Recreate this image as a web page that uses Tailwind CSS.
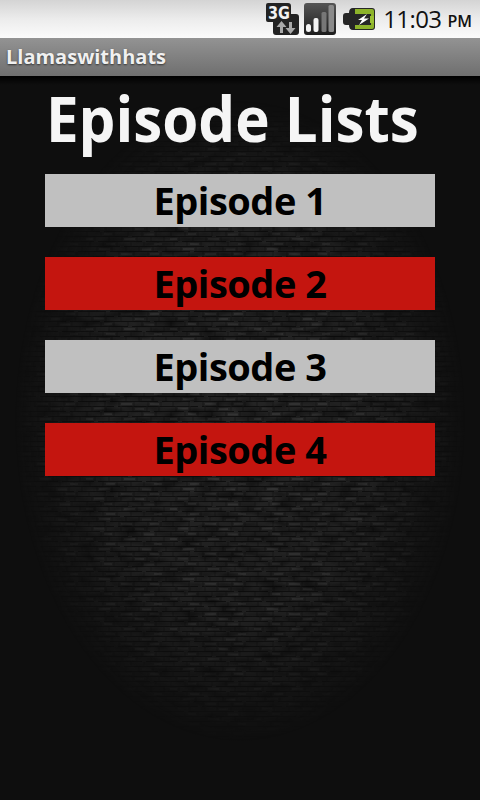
<!DOCTYPE html>
<html>
<head>
<meta charset="utf-8">
<script src="https://cdn.jsdelivr.net/npm/@tailwindcss/browser@4"></script>
</head>
<body class="m-0 bg-[#0e0e0e]">
<div class="relative w-[480px] h-[800px] overflow-hidden flex flex-col font-['Open_Sans','Liberation_Sans',sans-serif] bg-[#0e0e0e]">
  <!-- Status bar -->
  <div class="h-[38px] shrink-0 bg-gradient-to-b from-[#d4d4d4] via-[#ececec] to-[#fbfbfb] flex items-center justify-end pr-[8px]">
    <svg width="33" height="32" viewBox="0 0 33 32" class="mr-[5px]">
      <defs>
        <linearGradient id="dk" x1="0" y1="0" x2="0" y2="1"><stop offset="0" stop-color="#555"/><stop offset="1" stop-color="#1c1c1c"/></linearGradient>
      </defs>
      <path d="M2 0H22Q25 0 25 3V11H30Q33 11 33 14V29Q33 32 30 32H10Q7 32 7 29V19H2Q0 19 0 17V2Q0 0 2 0Z" fill="#222"/>
      <text x="2" y="16" font-family="DejaVu Sans" font-weight="bold" font-size="17" fill="#f2f2f2" textLength="22" lengthAdjust="spacingAndGlyphs">3G</text>
      <path d="M14 30V24H10.500L15.500 18L20.500 24H17V30Z" fill="#a8a8a8"/>
      <path d="M23 19V25H19.500L24.500 31L29.500 25H26V19Z" fill="#a8a8a8"/>
    </svg>
    <svg width="32" height="32" viewBox="0 0 32 32" class="mr-[7px]">
      <rect width="32" height="32" rx="3" fill="url(#dk)"/>
      <rect x="2" y="21" width="5" height="8" rx="2.500" fill="#f4f4f4"/>
      <rect x="9.500" y="15" width="5" height="14" rx="2" fill="#f4f4f4"/>
      <rect x="17.500" y="9" width="5" height="20" rx="1.500" fill="#777"/>
      <rect x="24.500" y="2" width="5.500" height="27" rx="1.500" fill="#8a8a8a"/>
    </svg>
    <svg width="32" height="24" viewBox="0 0 32 24" class="mr-[8px]">
      <path d="M0 9Q0 6 3 6H6Q6 1 10 1H29Q32 1 32 4V20Q32 23 29 23H10Q6 23 6 18H3Q0 18 0 15Z" fill="#262626"/>
      <path d="M12 2H29Q31 2 31 4V9H28V7H12ZM12 18H28V16H31V20Q31 22 29 22H12Z" fill="#8db32a"/>
      <rect x="27" y="9" width="4" height="7" fill="#9bc034"/>
      <path d="M24 7L15 13H19L16 18L26 11.500H21Z" fill="#fff"/>
    </svg>
    <span class="text-[24px] leading-[38px] font-medium text-[#111] tracking-[-0.6px]">11:03</span>
    <span class="text-[16px] leading-[38px] font-semibold text-[#111] ml-[6px] mt-[3px]">PM</span>
  </div>
  <!-- Title bar -->
  <div class="h-[38px] shrink-0 bg-gradient-to-b from-[#939393] to-[#6f6f6f] flex items-center pl-[6px]">
    <span class="text-[20px] font-bold leading-[38px] text-[#f0f0f0] [text-shadow:0_1px_2px_#333]">Llamaswithhats</span>
  </div>
  <!-- Content -->
  <div class="relative flex-1">
    <!-- textured backdrop -->
    <svg width="480" height="724" class="absolute inset-0">
      <defs>
        <pattern id="brick" width="84" height="30" patternUnits="userSpaceOnUse">
          <rect width="84" height="30" fill="#252525"/>
          <path d="M0 .5H30M34 .5H84M0 5.500H16M20 5.500H66M70 5.500H84M0 10.500H44M48 10.500H84M0 15.500H10M14 15.500H58M62 15.500H84M0 20.500H36M40 20.500H84M0 25.500H22M26 25.500H74M78 25.500H84" stroke="#101010" stroke-width="1"/>
          <path d="M8 0V5M22 0V5M37 0V5M49 0V5M63 0V5M75 0V5M3 6V10M17 6V10M30 6V10M44 6V10M58 6V10M72 6V10M11 11V15M25 11V15M38 11V15M53 11V15M67 11V15M80 11V15M6 16V20M19 16V20M33 16V20M47 16V20M60 16V20M74 16V20M13 21V25M28 21V25M42 21V25M55 21V25M69 21V25M82 21V25M5 26V30M21 26V30M35 26V30M50 26V30M64 26V30M77 26V30" stroke="#191919" stroke-width="1"/>
          <path d="M10 2.500H20M51 3H60M20 8H28M60 8.500H70M40 13H51M2 13H9M70 18H78M22 18H31M15 23H26M58 23.500H67M37 28H48M66 28H75" stroke="#343434" stroke-width="2"/>
        </pattern>
        <filter id="grain" x="0" y="0" width="100%" height="100%">
          <feTurbulence type="fractalNoise" baseFrequency="0.05 0.12" numOctaves="2" seed="7"/>
          <feColorMatrix type="matrix" values="0 0 0 0 0  0 0 0 0 0  0 0 0 0 0  1 0 0 0 -0.350"/>
        </filter>
        <radialGradient id="glow" gradientUnits="userSpaceOnUse" cx="0" cy="0" r="1" gradientTransform="translate(240 345) scale(225 320)">
          <stop offset="0" stop-color="#fff"/>
          <stop offset=".6" stop-color="#d0d0d0"/>
          <stop offset=".85" stop-color="#555"/>
          <stop offset="1" stop-color="#000"/>
        </radialGradient>
        <linearGradient id="top" x1="0" y1="0" x2="0" y2="1">
          <stop offset="0" stop-color="#000"/><stop offset="1" stop-color="#000" stop-opacity="0"/>
        </linearGradient>
        <mask id="m"><rect width="480" height="724" fill="url(#glow)"/></mask>
      </defs>
      <g mask="url(#m)">
        <rect width="480" height="724" fill="url(#brick)"/>
        <rect width="480" height="724" filter="url(#grain)"/>
      </g>
      <rect width="480" height="9" fill="url(#top)"/>
    </svg>
    <div class="relative flex flex-col items-center">
      <h1 class="text-[62px] leading-[85px] h-[98px] font-bold text-[#f5f5f5] scale-x-[0.94] translate-x-[-8px] whitespace-nowrap">Episode Lists</h1>
      <div class="flex flex-col gap-[30px] w-[390px]">
        <div class="h-[53px] bg-[#c0c0c0] flex items-center justify-center text-[38px] font-bold text-black tracking-[-0.5px]">Episode 1</div>
        <div class="h-[53px] bg-[#c4150f] flex items-center justify-center text-[38px] font-bold text-black tracking-[-0.5px]">Episode 2</div>
        <div class="h-[53px] bg-[#c0c0c0] flex items-center justify-center text-[38px] font-bold text-black tracking-[-0.5px]">Episode 3</div>
        <div class="h-[53px] bg-[#c4150f] flex items-center justify-center text-[38px] font-bold text-black tracking-[-0.5px]">Episode 4</div>
      </div>
    </div>
  </div>
</div>
</body>
</html>
